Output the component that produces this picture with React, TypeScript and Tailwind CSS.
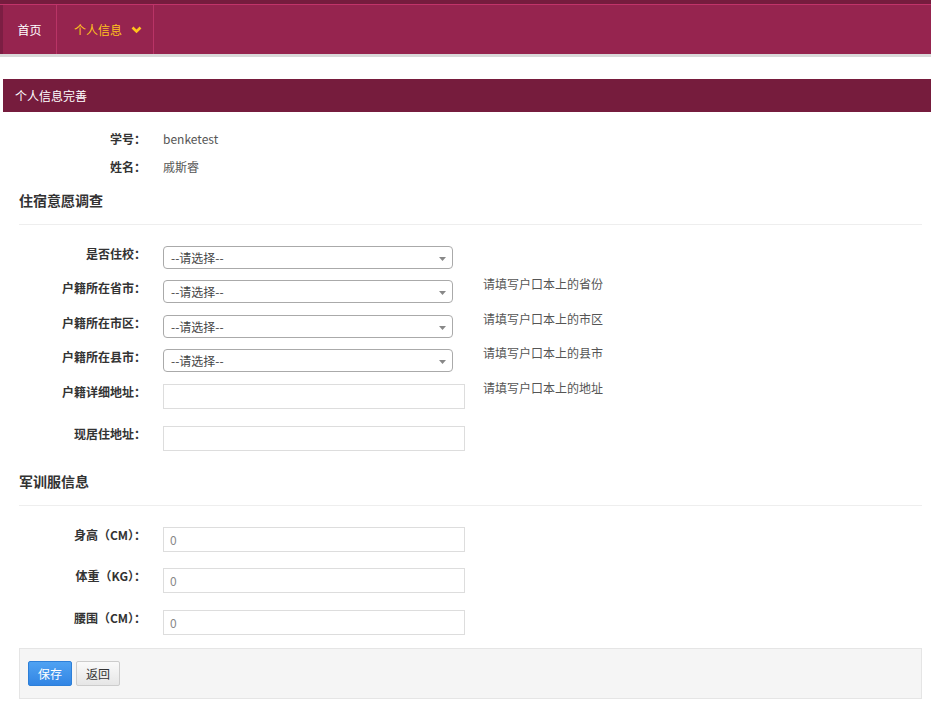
import React from "react";

const FONT = { fontFamily: '"Microsoft YaHei", "Noto Sans CJK SC", "Liberation Sans", sans-serif' };

function Caret() {
  return (
    <svg width="7" height="4" viewBox="0 0 7 4" className="absolute right-[6px] top-[10px]">
      <path d="M0 0 L7 0 L3.5 4 Z" fill="#888" />
    </svg>
  );
}

function SelectRow({ label, help, top }: { label: string; help?: string; top: string }) {
  return (
    <div className={`flex ${top}`}>
      <div className="w-[146px] shrink-0 text-right font-bold text-[#333] leading-[14px] pt-[1px]">{label}</div>
      <div className="ml-[17px] relative w-[290px] h-[23px] border border-[#aaa] rounded-[4px] bg-white">
        <span className="absolute left-[7px] top-[3px] text-[#444] leading-[16px]">--请选择--</span>
        <Caret />
      </div>
      {help && <div className="ml-[30px] -mt-[3px] text-[#555] leading-[14px]">{help}</div>}
    </div>
  );
}

function InputRow({ label, help, value, top }: { label: string; help?: string; value?: string; top: string }) {
  return (
    <div className={`flex ${top}`}>
      <div className="w-[146px] shrink-0 text-right font-bold text-[#333] leading-[14px] pt-[1px]">{label}</div>
      <div className="ml-[17px] w-[302px] h-[25px] border border-[#ddd] bg-white text-[#888] pl-[6px] pt-[4px] leading-[16px]">
        {value}
      </div>
      {help && <div className="ml-[18px] -mt-[3px] text-[#555] leading-[14px]">{help}</div>}
    </div>
  );
}

export default function App() {
  return (
    <div className="w-[931px] h-[709px] bg-white text-[12px] overflow-hidden" style={FONT}>
      {/* top nav */}
      <div className="h-[4px] bg-[#761c3e]" />
      <div className="flex h-[50px] bg-[#96244f] border-t border-[#c1336a]">
        <div className="w-[3px] bg-[#7c1e43]" />
        <div className="w-[54px] flex items-center justify-center text-white border-r border-[#b93466]">首页</div>
        <div className="w-[97px] flex items-center pl-[17px] text-[#ffc21c] border-r border-[#b93466]">
          <span>个人信息</span>
          <svg width="11" height="8" viewBox="0 0 11 8" className="ml-[9px]">
            <path d="M1.5 1.5 L5.5 5.5 L9.5 1.5" stroke="#ffc21c" strokeWidth="2.6" fill="none" />
          </svg>
        </div>
      </div>
      <div className="h-[3px] bg-[#d9d9d9]" />

      {/* panel header */}
      <div className="mt-[22px] ml-[3px] h-[33px] bg-[#761c3d] flex items-center pl-[12px] text-white">个人信息完善</div>

      <div className="px-[19px] pr-[9px]">
        <div className="flex mt-[20px] leading-[14px]">
          <div className="w-[127px] text-right font-bold text-[#333]">学号：</div>
          <div className="ml-[17px] text-[#555]">benketest</div>
        </div>
        <div className="flex mt-[14px] leading-[14px]">
          <div className="w-[127px] text-right font-bold text-[#333]">姓名：</div>
          <div className="ml-[17px] text-[#555]">戚斯睿</div>
        </div>

        <div className="mt-[18px] text-[14px] font-bold text-[#333] leading-[16px]">住宿意愿调查</div>
        <div className="mt-[16px] border-t border-[#eee]" />
      </div>

      <div className="pr-[9px]">
        <SelectRow label="是否住校：" top="mt-[21px]" />
        <SelectRow label="户籍所在省市：" help="请填写户口本上的省份" top="mt-[11px]" />
        <SelectRow label="户籍所在市区：" help="请填写户口本上的市区" top="mt-[12px]" />
        <SelectRow label="户籍所在县市：" help="请填写户口本上的县市" top="mt-[11px]" />
        <InputRow label="户籍详细地址：" help="请填写户口本上的地址" top="mt-[12px]" />
        <InputRow label="现居住地址：" top="mt-[17px]" />
      </div>

      <div className="px-[19px] pr-[9px]">
        <div className="mt-[22px] text-[14px] font-bold text-[#333] leading-[16px]">军训服信息</div>
        <div className="mt-[16px] border-t border-[#eee]" />
      </div>

      <div className="pr-[9px]">
        <InputRow label="身高（CM）：" value="0" top="mt-[21px]" />
        <InputRow label="体重（KG）：" value="0" top="mt-[16px]" />
        <InputRow label="腰围（CM）：" value="0" top="mt-[17px]" />
      </div>

      <div className="mx-[19px] mr-[9px] mt-[13px] h-[51px] bg-[#f5f5f5] border border-[#e5e5e5] flex items-center pl-[8px] gap-[4px]">
        <button className="w-[44px] h-[25px] rounded-[2px] border border-[#2d7fd8] bg-gradient-to-b from-[#4fa2f2] to-[#3285e4] text-white">保存</button>
        <button className="w-[44px] h-[25px] rounded-[2px] border border-[#ccc] bg-gradient-to-b from-[#fafafa] to-[#e6e6e6] text-[#333]">返回</button>
      </div>
    </div>
  );
}
